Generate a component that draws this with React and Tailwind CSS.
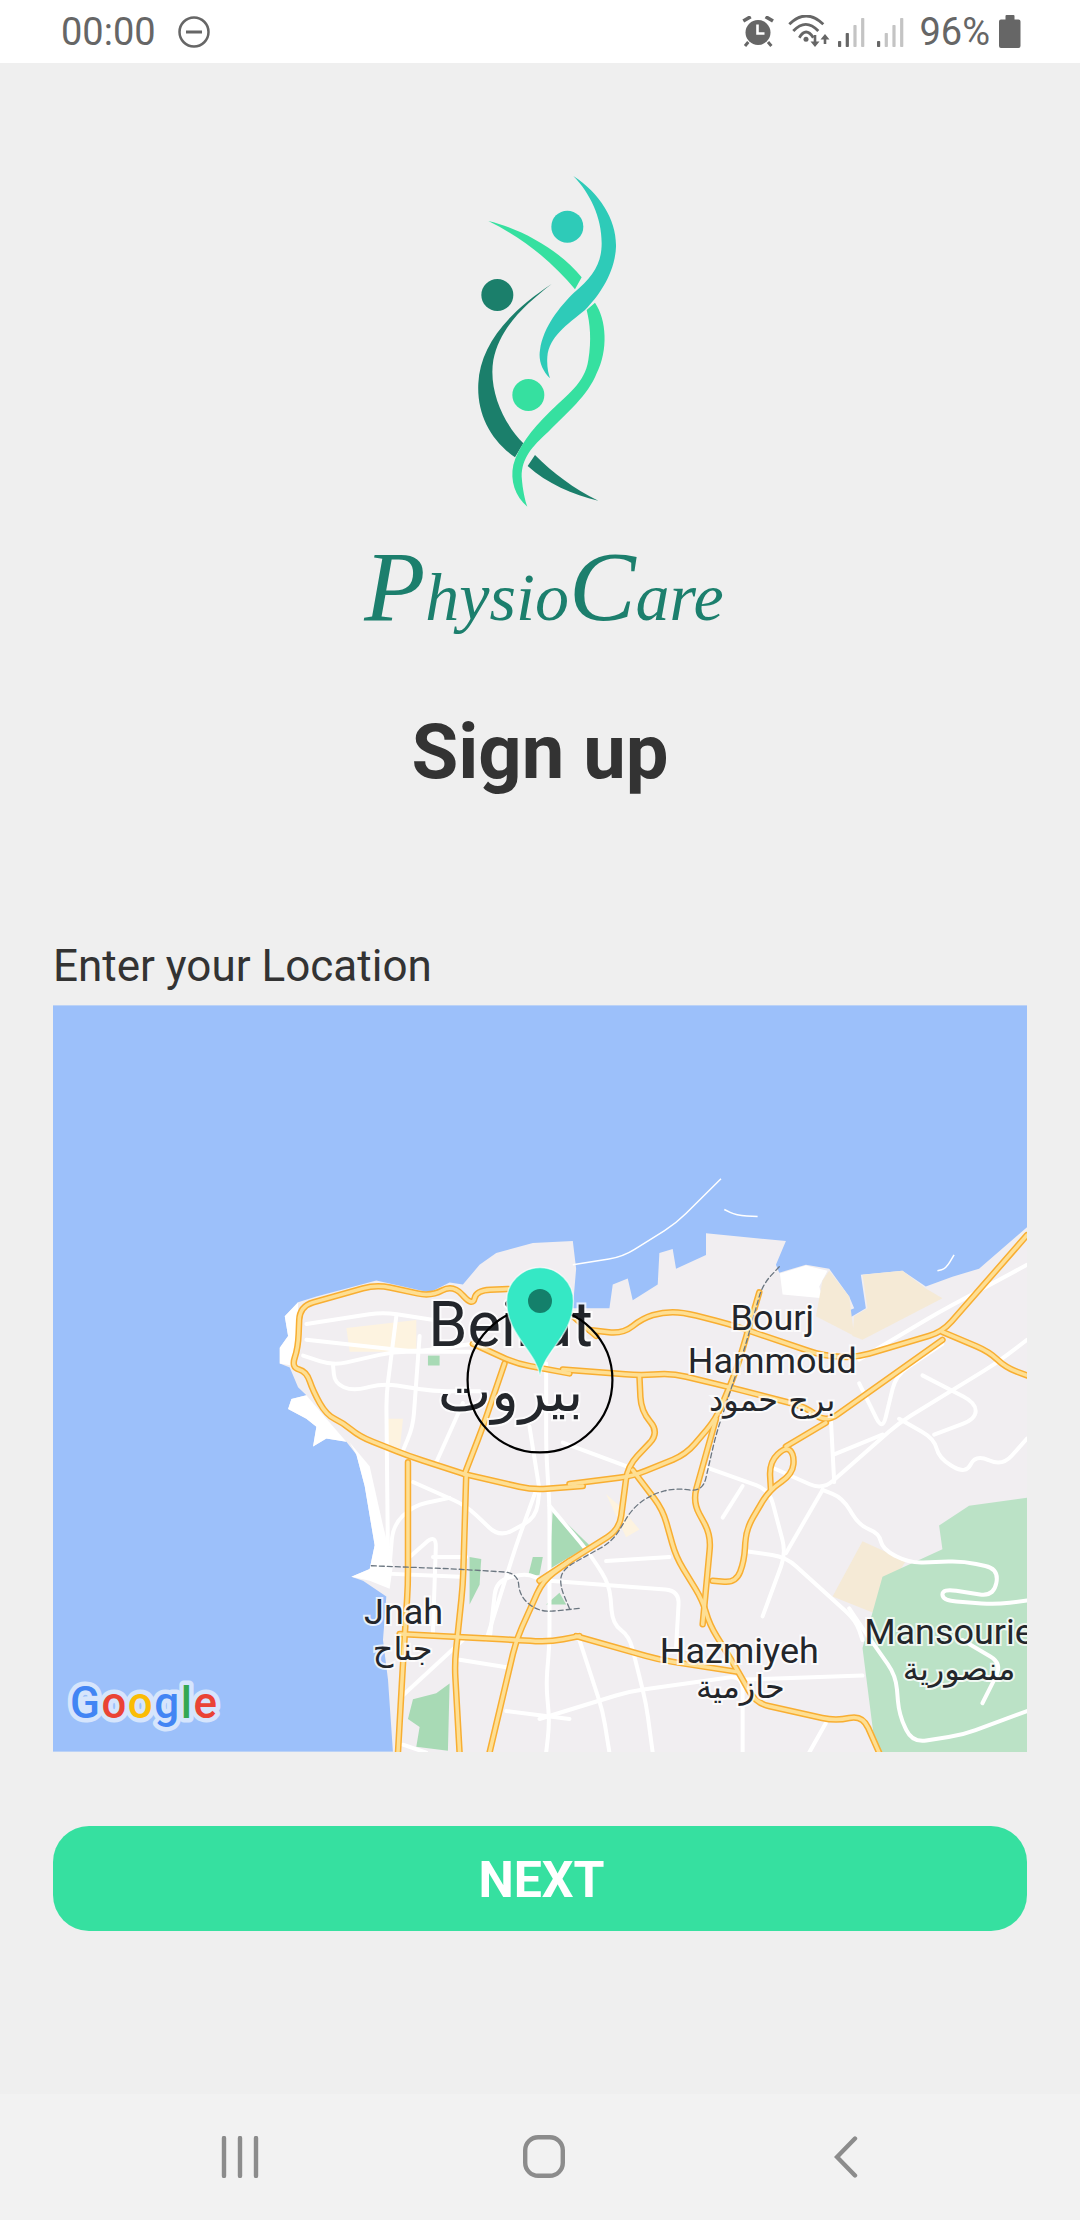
import React from "react";

const ROBOTO = { fontFamily: "Roboto, sans-serif" };
const ARABIC = "'DejaVu Sans', sans-serif";

// traced from the reference crops: a = left half of the map, b = right half
const a = (x, y) => [x / 3 + 50, y * 0.3954 + 1150];
const b = (x, y) => [x / 3 + 530, y * 0.3954 + 1150];

// polyline with small rounded corners
const line = (fn, pts) => {
  const p = pts.map(([x, y]) => fn(x, y));
  let d = `M${p[0][0]} ${p[0][1]}`;
  for (let i = 1; i < p.length - 1; i++) {
    const [x, y] = p[i];
    const toward = (q) => {
      const len = Math.hypot(q[0] - x, q[1] - y) || 1;
      const r = Math.min(14, len / 2);
      return [x + ((q[0] - x) * r) / len, y + ((q[1] - y) * r) / len];
    };
    const s = toward(p[i - 1]);
    const e = toward(p[i + 1]);
    d += ` L${s[0]} ${s[1]} Q${x} ${y} ${e[0]} ${e[1]}`;
  }
  const last = p[p.length - 1];
  return d + ` L${last[0]} ${last[1]}`;
};
const poly = (fn, pts) => pts.map(([x, y]) => fn(x, y).join(",")).join(" ");

const LAND =
  poly(a, [
    [1030, 1525], [1015, 1340], [1000, 1240], [1010, 1130], [940, 1090], [905, 1080], [960, 1060], [975, 1000],
    [945, 850], [920, 770], [890, 738], [830, 730], [790, 750], [800, 700], [770, 680], [715, 655], [725, 630],
    [770, 620], [745, 600], [720, 550], [690, 540], [690, 500], [715, 470], [705, 420], [745, 385], [800, 370],
    [980, 330], [1140, 360], [1200, 335], [1240, 340], [1290, 290], [1340, 260], [1450, 235],
  ]) +
  " " +
  poly(b, [
    [130, 230], [140, 300], [130, 400], [240, 400], [250, 340], [295, 325], [310, 380], [385, 340], [390, 260],
    [430, 250], [440, 300], [530, 265], [530, 210], [770, 230], [740, 290], [750, 310], [830, 290], [900, 300],
    [960, 370], [975, 400], [920, 420], [930, 440], [1010, 400], [995, 315], [1120, 305], [1190, 345], [1270, 320],
    [1350, 300], [1494, 195], [1494, 1525],
  ]);

const BEACH = [
  [[900, 740], [960, 800], [1000, 950], [1030, 1050], [1020, 1110], [960, 1090], [905, 1080], [960, 1060], [975, 1000], [945, 850], [920, 770]],
  [[790, 750], [800, 700], [770, 680], [715, 655], [725, 630], [770, 620], [830, 680], [890, 738], [830, 730]],
  [[745, 385], [705, 420], [715, 470], [690, 500], [690, 540], [725, 545], [745, 470]],
];

const HIGHWAYS = [
  [a, [[1245, 820], [1080, 775], [930, 725], [880, 690], [830, 670], [790, 610], [770, 560], [725, 550], [745, 500], [750, 395], [980, 340], [1145, 370], [1210, 340], [1270, 395], [1280, 355], [1400, 350], [1500, 370], [1640, 470]]],
  [b, [[180, 455], [280, 465], [340, 425], [400, 410], [460, 410], [600, 440], [880, 520], [980, 525], [1240, 460], [1494, 215]]],
  [a, [[1270, 490], [1400, 540], [1560, 565]]],
  [b, [[100, 555], [330, 570], [430, 565], [600, 600], [830, 650], [890, 690], [1240, 480]]],
  [a, [[1245, 820], [1300, 700], [1365, 540]]],
  [a, [[1075, 790], [1075, 1100], [1060, 1300], [1045, 1525]]],
  [a, [[1250, 820], [1240, 1100], [1215, 1300], [1230, 1525]]],
  [a, [[1245, 820], [1450, 860], [1600, 850]]],
  [b, [[120, 845], [310, 825], [470, 770], [560, 680], [620, 560], [690, 360]]],
  [b, [[310, 810], [400, 910], [440, 1030], [520, 1140], [540, 1200], [620, 1310], [680, 1400], [920, 1445], [1000, 1430], [1050, 1525]]],
  [b, [[330, 570], [335, 660], [390, 715], [295, 800], [270, 960], [120, 1040], [30, 1090]]],
  [a, [[1320, 1525], [1400, 1240], [1480, 1090], [1560, 1040]]],
  [a, [[1050, 1225], [1400, 1240], [1500, 1245], [1590, 1230]]],
  [b, [[140, 1230], [390, 1290], [620, 1320]]],
  [b, [[560, 680], [490, 890], [545, 975], [520, 1200]]],
  [b, [[550, 1090], [620, 1095], [645, 1040], [650, 960], [720, 860], [790, 820], [795, 770], [770, 750], [720, 790], [725, 860]]],
  [b, [[770, 750], [890, 690]]],
  [b, [[1240, 460], [1380, 510], [1430, 550], [1494, 570]]],
];

const STREETS = [
  [a, [[770, 440], [1000, 410], [1230, 440]]],
  [a, [[770, 480], [1100, 510], [1270, 490]]],
  [a, [[760, 520], [850, 545], [1030, 510], [1260, 510]]],
  [a, [[850, 545], [855, 590], [910, 610], [1000, 590], [1150, 610], [1290, 610]]],
  [a, [[1040, 420], [1010, 620], [1015, 1050]]],
  [a, [[1110, 470], [1090, 700], [1060, 760]]],
  [a, [[1160, 790], [1240, 640]]],
  [a, [[1090, 840], [1250, 900], [1350, 980], [1460, 930], [1470, 860]]],
  [a, [[1460, 860], [1400, 1000], [1310, 1240]]],
  [a, [[1020, 1050], [1030, 950], [1090, 900], [1200, 880]]],
  [a, [[1080, 1030], [1160, 970], [1150, 1220]]],
  [a, [[1150, 1030], [1250, 1030]]],
  [a, [[960, 1070], [1230, 1080]]],
  [a, [[1320, 1240], [1340, 1090], [1430, 1070], [1480, 1090]]],
  [a, [[1060, 1380], [1240, 1240]]],
  [a, [[1230, 1290], [1380, 1310]]],
  [a, [[1370, 1420], [1560, 1440]]],
  [a, [[1490, 1525], [1500, 1450], [1490, 1350], [1500, 1250], [1500, 900], [1490, 760], [1490, 540]]],
  [a, [[1440, 700], [1470, 860]]],
  [a, [[1060, 1505], [1130, 1525]]],
  [b, [[60, 900], [180, 1020], [240, 1100], [250, 1200], [300, 1230], [350, 1400], [370, 1525]]],
  [b, [[230, 1040], [420, 1030]]],
  [b, [[60, 1090], [450, 1115], [440, 1260]]],
  [b, [[100, 740], [290, 800]]],
  [b, [[150, 1240], [220, 1420], [240, 1525]]],
  [b, [[30, 1440], [300, 1370], [640, 1330], [640, 1525]]],
  [b, [[520, 800], [720, 860], [770, 1020], [700, 1180]]],
  [b, [[640, 850], [580, 930]]],
  [b, [[650, 1015], [770, 1030], [980, 1190], [1000, 1240]]],
  [b, [[720, 800], [880, 860], [1110, 690], [1400, 540], [1494, 480]]],
  [b, [[880, 860], [770, 1020]]],
  [b, [[905, 680], [915, 840]]],
  [b, [[915, 770], [1060, 720]]],
  [b, [[990, 590], [1060, 710], [1100, 570], [1240, 490]]],
  [b, [[1110, 680], [1215, 730], [1230, 780], [1310, 820], [1340, 770], [1420, 800], [1494, 730]]],
  [b, [[1180, 570], [1340, 640], [1340, 680], [1215, 720]]],
  [b, [[880, 860], [940, 880], [990, 950], [1050, 970], [1060, 1010], [1140, 1045], [1300, 1040], [1410, 1060], [1394, 1130], [1240, 1110], [1240, 1140], [1400, 1150], [1494, 1140]]],
  [b, [[960, 1160], [1000, 1210], [1100, 1330], [1110, 1430], [1150, 1500], [1300, 1480], [1494, 1420]]],
  [b, [[990, 530], [1230, 410], [1494, 290]]],
  [b, [[840, 1525], [890, 1450]]],
  [b, [[650, 1340], [1000, 1330]]],
  [b, [[1300, 1240], [1420, 1300], [1360, 1400]]],
];

const SAND = [
  [b, [[910, 1130], [1000, 990], [1130, 1040], [1030, 1170]]],
  [b, [[1000, 315], [1120, 305], [1190, 350], [1240, 375], [1000, 480], [970, 470], [975, 420], [1015, 400]]],
  [b, [[880, 330], [900, 305], [960, 370], [975, 470], [860, 420]]],
  [a, [[890, 450], [1100, 430], [1100, 510], [900, 510]]],
  [a, [[1010, 680], [1060, 680], [1050, 760], [1010, 750]]],
  [b, [[230, 870], [270, 900], [330, 960], [290, 980]]],
];

const GREEN = [
  [b, [[1030, 1170], [1060, 1080], [1240, 1010], [1230, 950], [1320, 900], [1494, 880], [1494, 1525], [1040, 1525], [1000, 1260]]],
];
const DARK_GREEN = [
  [b, [[70, 910], [180, 1000], [60, 1060]]],
  [a, [[1090, 1390], [1160, 1375], [1200, 1350], [1195, 1520], [1100, 1510], [1110, 1460], [1075, 1440]]],
  [a, [[1260, 1030], [1295, 1035], [1290, 1100], [1260, 1150]]],
  [a, [[1450, 1030], [1480, 1030], [1470, 1075], [1435, 1080]]],
  [a, [[1135, 520], [1170, 520], [1170, 545], [1135, 545]]],
  [a, [[1490, 1150], [1530, 1120], [1550, 1150]]],
];

const LABELS = [
  { t: "Beirut", x: 511, y: 1346, s: 63 },
  { t: "بيروت", x: 511, y: 1411, s: 57, ar: true },
  { t: "Bourj", x: 773, y: 1330, s: 36 },
  { t: "Hammoud", x: 773, y: 1373, s: 36 },
  { t: "برج حمود", x: 773, y: 1411, s: 32, ar: true },
  { t: "Jnah", x: 404, y: 1624, s: 36 },
  { t: "جناح", x: 403, y: 1660, s: 32, ar: true },
  { t: "Hazmiyeh", x: 740, y: 1663, s: 36 },
  { t: "حازمية", x: 741, y: 1698, s: 32, ar: true },
  { t: "Mansourieh", x: 865, y: 1644, s: 36, start: true },
  { t: "منصورية", x: 960, y: 1680, s: 32, ar: true },
];

const GOOGLE = [
  ["G", "#4285f4"],
  ["o", "#ea4335"],
  ["o", "#fbbc05"],
  ["g", "#4285f4"],
  ["l", "#34a853"],
  ["e", "#ea4335"],
];

const MapPicture = () => (
  <svg viewBox="53 1005 975 747" className="block w-full h-full">
    <rect x="53" y="1005" width="975" height="747" fill="#9cc0fa" />
    <polygon points={LAND} fill="#f1eef1" />
    {BEACH.map((p, i) => <polygon key={i} points={poly(a, p)} fill="#ffffff" />)}
    <polygon points={poly(b, [[752, 312], [830, 292], [895, 305], [870, 345], [880, 375], [760, 365]])} fill="#ffffff" />
    {SAND.map(([fn, p], i) => <polygon key={i} points={poly(fn, p)} fill={i < 3 ? "#f5ead6" : "#fdf3e0"} />)}
    {GREEN.map(([fn, p], i) => <polygon key={i} points={poly(fn, p)} fill="#bbe2c6" />)}
    {DARK_GREEN.map(([fn, p], i) => <polygon key={i} points={poly(fn, p)} fill="#a8dab5" />)}
    <path d={line(b, [[130, 290], [280, 270], [440, 185], [575, 72]])} fill="none" stroke="#fff" strokeWidth="1.5" />
    <path d={line(b, [[585, 150], [620, 165], [685, 168]])} fill="none" stroke="#fff" strokeWidth="1.5" />
    <path d={line(b, [[1225, 305], [1250, 300], [1275, 265]])} fill="none" stroke="#fff" strokeWidth="1.5" />
    <g fill="none" strokeLinecap="round" strokeLinejoin="round">
      {STREETS.map(([fn, p], i) => <path key={i} d={line(fn, p)} stroke="#ffffff" strokeWidth="4" />)}
      {HIGHWAYS.map(([fn, p], i) => <path key={i} d={line(fn, p)} stroke="#f8ae32" strokeWidth="6.5" />)}
      {HIGHWAYS.map(([fn, p], i) => <path key={i} d={line(fn, p)} stroke="#fedf93" strokeWidth="3.5" />)}
      <path d={line(a, [[965, 1052], [1215, 1060], [1405, 1070], [1410, 1130], [1470, 1170], [1590, 1160]])} stroke="#6b7680" strokeWidth="1.3" strokeDasharray="5 3" />
      <path d={line(b, [[750, 295], [700, 340], [650, 490], [560, 720], [520, 865], [440, 855], [370, 870], [310, 905], [250, 990], [100, 1060], [90, 1100], [120, 1160]])} stroke="#6b7680" strokeWidth="1.3" strokeDasharray="5 3" />
    </g>
    <g fill="#23262b" stroke="#ffffff" strokeWidth="4" strokeOpacity="0.75" style={{ paintOrder: "stroke" }}>
      {LABELS.map((l) => (
        <text
          key={l.t}
          x={l.x}
          y={l.y}
          fontSize={l.s}
          textAnchor={l.start ? "start" : "middle"}
          fontFamily={l.ar ? ARABIC : "Roboto, sans-serif"}
        >
          {l.t}
        </text>
      ))}
    </g>
    <text x="70" y="1718" fontSize="44" fontWeight="500" letterSpacing="1.5" fontFamily="Roboto, sans-serif" stroke="#d6e5fc" strokeWidth="9" strokeLinejoin="round" style={{ paintOrder: "stroke" }}>
      {GOOGLE.map(([c, col], i) => <tspan key={i} fill={col}>{c}</tspan>)}
    </text>
    <circle cx="540.5" cy="1380" r="72.5" fill="none" stroke="#000" strokeWidth="2.2" />
    <path d="M540.5 1376 C536 1350 507 1335 507 1301 A33.5 33.5 0 0 1 574 1301 C574 1335 545 1350 540.5 1376 Z" fill="#35e8c5" stroke="#ffffff" strokeOpacity="0.6" strokeWidth="1.5" />
    <circle cx="540.5" cy="1301" r="12" fill="#14806b" />
  </svg>
);

const LogoMark = () => (
  <svg viewBox="0 0 1200 1050" className="w-[400px] h-[350px]">
    <path fill="#2ecbb8" d="M700 48 C780 100 830 180 828 260 C825 340 775 410 735 450 C680 495 628 530 622 590 C620 620 625 640 630 655 C605 630 595 600 600 570 C610 500 660 440 700 400 C760 350 785 310 785 250 C785 170 750 100 700 48 Z" />
    <path fill="#36e0a0" d="M445 183 C540 205 660 270 725 352 L705 388 C640 310 560 240 445 183 Z" />
    <path fill="#1b7f6b" d="M635 372 C560 430 480 500 460 600 C445 690 490 790 550 850 L525 892 C450 840 410 760 415 670 C420 560 500 460 635 372 Z" />
    <path fill="#1b7f6b" d="M585 885 C640 940 700 985 775 1022 C700 1005 620 970 563 918 Z" />
    <path fill="#36e0a0" d="M765 428 C800 480 805 570 770 640 C745 705 680 760 625 815 C575 860 545 895 545 950 C548 990 555 1020 562 1040 C525 1010 510 960 520 915 C535 860 575 810 625 760 C680 705 735 670 745 600 C755 540 750 490 740 450 Z" />
    <circle cx="682" cy="200" r="48" fill="#2ecbb8" />
    <circle cx="472" cy="405" r="48" fill="#1b7f6b" />
    <circle cx="565" cy="705" r="48" fill="#36e0a0" />
  </svg>
);

const SignalBars = ({ active }) => (
  <svg viewBox="0 0 28 32" className="w-[28px] h-[32px]">
    {[[0, 6], [7.7, 14], [15.4, 22], [23.1, 29]].map(([x, h], i) => (
      <rect key={x} x={x} y={31 - h} width="3.2" height={h} rx="0.8" fill={i < active ? "#666" : "#c4c4c4"} />
    ))}
  </svg>
);

const StatusBar = () => (
  <div className="h-[63px] bg-white flex items-center justify-between pl-[61px] pr-[59px] text-[#666]" style={ROBOTO}>
    <div className="flex items-center gap-[22px]">
      <span className="text-[38px] leading-none">00:00</span>
      <svg viewBox="0 0 32 32" className="w-[32px] h-[32px]">
        <circle cx="16" cy="16" r="14.5" fill="none" stroke="#666" strokeWidth="2.5" />
        <rect x="8" y="14.5" width="16" height="3" fill="#666" />
      </svg>
    </div>
    <div className="flex items-center">
      <svg viewBox="0 0 33 32" className="w-[33px] h-[32px]">
        <circle cx="16" cy="16.5" r="12.5" fill="#666" />
        <path d="M15.5 8.5v9h7" fill="none" stroke="#fff" strokeWidth="2.6" />
        <path d="M1.3 5 L8.7 0.7 M31 5 L23.6 0.7" fill="none" stroke="#666" strokeWidth="3.6" />
        <path d="M3 30 L6.3 26 M29.4 30 L26 26" fill="none" stroke="#666" strokeWidth="3" />
      </svg>
      <svg viewBox="0 -2 43 34" className="w-[43px] h-[34px] ml-[12px]">
        <g fill="none" stroke="#666" strokeWidth="2.8">
          <path d="M2.3 7.3 Q19 -9.3 36.3 7.3" />
          <path d="M6.3 14 Q18.8 0.6 31.3 14" />
          <path d="M12.3 20.7 Q19 9.3 26.3 20.7" />
        </g>
        <circle cx="19" cy="22.3" r="2.5" fill="#666" />
        <path d="M28 18v8" stroke="#666" strokeWidth="2.6" />
        <path d="M23.5 24.5h9L28 30Z M33.5 22.5h9L38 17Z" fill="#666" />
        <path d="M38 22v5" stroke="#666" strokeWidth="2.6" />
      </svg>
      <div className="ml-[8px]"><SignalBars active={2} /></div>
      <div className="ml-[11px]"><SignalBars active={1} /></div>
      <span className="text-[38px] leading-none ml-[14px]">96%</span>
      <svg viewBox="0 0 22 33" className="w-[22px] h-[33px] ml-[9px]">
        <path d="M6.5 1a1 1 0 0 1 1-1h7a1 1 0 0 1 1 1v3.500h4a2 2 0 0 1 2 2V31a2 2 0 0 1-2 2H2a2 2 0 0 1-2-2V6.500a2 2 0 0 1 2-2h4.500Z" fill="#666" />
      </svg>
    </div>
  </div>
);

const NavBar = () => (
  <div className="h-[126px] bg-[#f2f2f2] flex items-center justify-between pl-[221px] pr-[222px] pb-[1px]">
    <svg viewBox="0 0 40 42" className="w-[40px] h-[42px]">
      <path d="M3 2v38M19 2v38M35 2v38" stroke="#8c8c8c" strokeWidth="4.4" strokeLinecap="round" />
    </svg>
    <svg viewBox="0 0 42 43" className="w-[42px] h-[43px] mr-[7px]">
      <rect x="2.200" y="2.200" width="37.6" height="38.6" rx="13" fill="none" stroke="#8c8c8c" strokeWidth="4.4" />
    </svg>
    <svg viewBox="0 0 24 42" className="w-[24px] h-[42px]">
      <path d="M21 2.500 L3 21 L21 39.500" fill="none" stroke="#8c8c8c" strokeWidth="4.4" strokeLinecap="round" />
    </svg>
  </div>
);

export default function App() {
  return (
    <div className="w-[1080px] h-[2220px] bg-[#efefef] flex flex-col" style={ROBOTO}>
      <StatusBar />
      <div className="flex-1 flex flex-col items-center">
        <div className="mt-[97px]">
          <LogoMark />
        </div>
        <div className="mt-[22px] ml-[8px] h-[110px] text-[68px] leading-[110px] italic text-[#1c7f6d] whitespace-nowrap" style={{ fontFamily: "'Liberation Serif', serif" }}>
          <span className="text-[100px]">P</span>hysio<span className="text-[100px]">C</span>are
        </div>
        <h1 className="mt-[68px] text-[76px] leading-[84px] font-bold text-[#333333]">Sign up</h1>
        <div className="w-full px-[53px] mt-[147px]">
          <div className="text-[44px] leading-[50px] text-[#333333]">Enter your Location</div>
          <div className="h-[747px] mt-[14px] overflow-hidden">
            <MapPicture />
          </div>
          <button className="w-full h-[105px] mt-[74px] pt-[4px] pl-[3px] rounded-[36px] bg-[#36e0a0] text-white text-[50px] font-bold">NEXT</button>
        </div>
      </div>
      <NavBar />
    </div>
  );
}
